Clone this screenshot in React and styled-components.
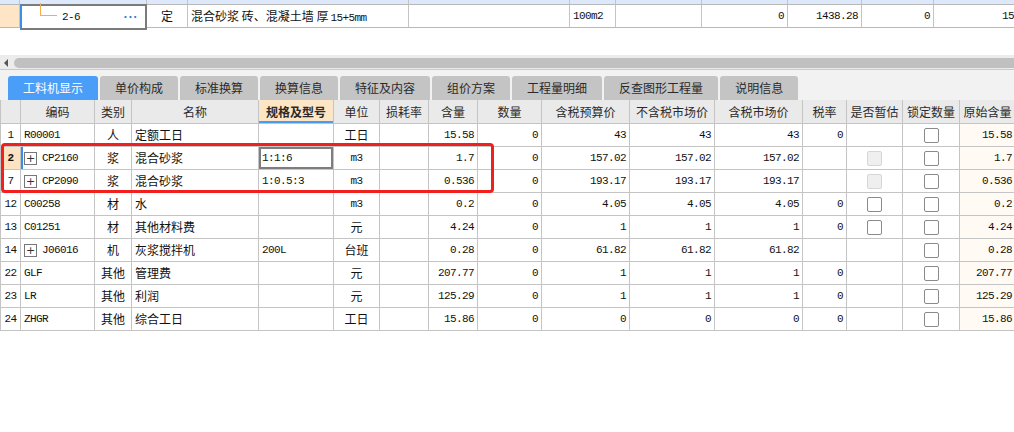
import React from 'react'
import styled, { createGlobalStyle } from 'styled-components'

const GlobalStyle = createGlobalStyle`
  html, body {
    margin: 0;
    padding: 0;
    background: #ffffff;
  }
  body {
    width: 1014px;
    height: 432px;
    overflow: hidden;
    font-family: "Noto Sans CJK SC", "Noto Sans", sans-serif;
    font-size: 12px;
    color: #1a1a1a;
  }
`

const mono = `"Liberation Mono", "DejaVu Sans Mono", "Noto Sans CJK SC", monospace`

const topCols = '20px 127px 41px 221px 161px 46px 86px 86px 74px 72px 114px'
const mainCols = '20px 74px 37px 127px 75px 46px 49px 49px 64px 88px 85px 88px 44px 56px 57px 56px'

const Page = styled.div`
  width: 1014px;
  height: 432px;
  overflow: hidden;
  background: #fff;
`

/* ---- upper grid (the quota rows) ---- */

const TopGrid = styled.div`
  display: grid;
  grid-template-columns: ${topCols};
  width: 1048px;
`

const StripCell = styled.div`
  height: 4px;
  background: #dde8fa;
  border-right: 1px solid #c4c4c4;
  border-bottom: 1px solid #b8b8b8;
`

const TopCell = styled.div`
  height: 22px;
  line-height: 22px;
  border-right: 1px solid #c4c4c4;
  border-bottom: 1px solid #b8b8b8;
  padding: 0 3px;
  text-align: ${p => p.$align || 'left'};
  font-family: ${p => (p.$mono ? mono : 'inherit')};
  font-size: ${p => (p.$mono ? '11px' : '12px')};
  letter-spacing: ${p => (p.$mono ? '-0.6px' : '0')};
  color: #111;
  background: ${p => p.$bg || 'transparent'};
  white-space: nowrap;
  overflow: hidden;
`

const Mono = styled.span`
  font-family: ${mono};
  font-size: 11px;
  letter-spacing: -0.6px;
  margin-left: 2px;
`

const TreeCell = styled.div`
  position: relative;
  height: 22px;
  margin-top: -1px;
  margin-bottom: -1px;
  border: 2px solid #7b7b7b;
  border-left: 2px solid #3b8ee8;
  display: flex;
  align-items: center;
  padding-left: 40px;
  padding-right: 7px;
  font-family: ${mono};
  font-size: 11px;
  letter-spacing: -0.6px;
  color: #111;
`

const TreeLine = styled.span`
  position: absolute;
  left: 18px;
  top: -3px;
  width: 16px;
  height: 12px;
  border-left: 1px solid #f5ae4e;
  border-bottom: 1px solid #f5ae4e;
`

const Dots = styled.span`
  margin-left: auto;
  color: #2f7fd8;
  font-weight: bold;
  letter-spacing: 1px;
  font-family: "DejaVu Sans", sans-serif;
  font-size: 10px;
`

const Gap = styled.div`
  height: 26px;
`

/* ---- horizontal scrollbar ---- */

const ScrollBar = styled.div`
  height: 15px;
  box-sizing: border-box;
  padding: 3px 0 2px;
  background: #ececec;
  border-bottom: 1px solid #c9c9c9;
  display: flex;
  align-items: center;
  gap: 6px;
`

const Arrow = styled.span`
  margin-left: 4px;
  width: 0;
  height: 0;
  border-top: 4px solid transparent;
  border-bottom: 4px solid transparent;
  border-right: 4px solid #555;
`

const Thumb = styled.div`
  flex: 1;
  height: 10px;
  border-radius: 5px 0 0 5px;
  background: #c0c0c0;
`

/* ---- tabs ---- */

const TabBar = styled.div`
  height: 30px;
  box-sizing: border-box;
  padding: 6px 0 0 8px;
  background: #f2f2f2;
  display: flex;
  gap: 2px;
`

const Tab = styled.div`
  height: 24px;
  line-height: 24px;
  padding: 0 15px;
  border-radius: 3px 3px 0 0;
  background: ${p => (p.$active ? '#4b9ef7' : '#c4c4c4')};
  color: ${p => (p.$active ? '#fff' : '#2a2a2a')};
  font-size: 12px;
  white-space: nowrap;
`

/* ---- main table ---- */

const Table = styled.div`
  position: relative;
  width: 1016px;
  border-left: 1px solid #c4c4c4;
`

const Row = styled.div`
  display: grid;
  grid-template-columns: ${mainCols};
`

const HeadCell = styled.div`
  height: 23px;
  line-height: 23px;
  text-align: center;
  background: ${p => (p.$hot ? '#fde6c6' : '#eaeaea')};
  font-weight: ${p => (p.$hot ? 'bold' : 'normal')};
  box-shadow: ${p => (p.$hot ? 'inset 0 -2px 0 #4a9cf2' : 'none')};
  color: #2a2a2a;
  border-right: 1px solid #c4c4c4;
  border-bottom: 1px solid #c4c4c4;
  white-space: nowrap;
  overflow: hidden;
`

const Cell = styled.div`
  position: relative;
  height: 22px;
  line-height: 22px;
  padding: 0 3px;
  border-right: 1px solid #c4c4c4;
  border-bottom: 1px solid #c4c4c4;
  text-align: ${p => p.$align || 'left'};
  font-family: ${p => (p.$mono ? mono : 'inherit')};
  font-size: ${p => (p.$mono ? '11px' : '12px')};
  letter-spacing: ${p => (p.$mono ? '-0.6px' : '0')};
  font-weight: ${p => (p.$bold ? 'bold' : 'normal')};
  color: #111;
  background: ${p => p.$bg || '#fff'};
  white-space: nowrap;
  overflow: hidden;
  display: ${p => (p.$flex ? 'flex' : 'block')};
  align-items: center;
  justify-content: center;
  ${p => p.$focus && 'box-shadow: inset 0 0 0 2px #7e7e7e;'}
  ${p => p.$lead && 'box-shadow: inset 2px 0 0 #3b8ee8;'}
`

const CodeWrap = styled.span`
  display: flex;
  align-items: center;
  gap: 5px;
`

const Expand = styled.span`
  width: 11px;
  height: 11px;
  border: 1px solid #777;
  display: inline-flex;
  align-items: center;
  justify-content: center;
  font-family: "DejaVu Sans", sans-serif;
  font-size: 11px;
  line-height: 1;
  color: #333;
  letter-spacing: 0;
`

const Check = styled.span`
  display: block;
  width: 13px;
  height: 13px;
  border-radius: 2px;
  border: 1px solid ${p => (p.$disabled ? '#d6d6d6' : '#8a8a8a')};
  background: ${p => (p.$disabled ? '#efefef' : '#fff')};
`

const Highlight = styled.div`
  position: absolute;
  left: 0;
  top: 43px;
  width: 493px;
  height: 50px;
  box-sizing: border-box;
  border: 3px solid #f0201e;
  border-radius: 4px;
  pointer-events: none;
`

const tabs = ['工料机显示', '单价构成', '标准换算', '换算信息', '特征及内容', '组价方案', '工程量明细', '反查图形工程量', '说明信息']

const heads = ['', '编码', '类别', '名称', '规格及型号', '单位', '损耗率', '含量', '数量', '含税预算价', '不含税市场价', '含税市场价', '税率', '是否暂估', '锁定数量', '原始含量']

// no, code, expandable, kind, name, spec, unit, qty, prices, tax, estimate ('', 'cb', 'dis')
const rows = [
  ['1', 'R00001', false, '人', '定额工日', '', '工日', '15.58', ['43', '43', '43'], '0', ''],
  ['2', 'CP2160', true, '浆', '混合砂浆', '1:1:6', 'm3', '1.7', ['157.02', '157.02', '157.02'], '', 'dis'],
  ['7', 'CP2090', true, '浆', '混合砂浆', '1:0.5:3', 'm3', '0.536', ['193.17', '193.17', '193.17'], '', 'dis'],
  ['12', 'C00258', false, '材', '水', '', 'm3', '0.2', ['4.05', '4.05', '4.05'], '0', 'cb'],
  ['13', 'C01251', false, '材', '其他材料费', '', '元', '4.24', ['1', '1', '1'], '0', 'cb'],
  ['14', 'J06016', true, '机', '灰浆搅拌机', '200L', '台班', '0.28', ['61.82', '61.82', '61.82'], '', ''],
  ['22', 'GLF', false, '其他', '管理费', '', '元', '207.77', ['1', '1', '1'], '0', ''],
  ['23', 'LR', false, '其他', '利润', '', '元', '125.29', ['1', '1', '1'], '0', ''],
  ['24', 'ZHGR', false, '其他', '综合工日', '', '工日', '15.86', ['0', '0', '0'], '0', ''],
]

const isAscii = s => /^[\x00-\x7f]*$/.test(s)

export default function App() {
  return (
    <Page>
      <GlobalStyle />

      <TopGrid>
        {Array.from({ length: 11 }).map((_, i) => <StripCell key={i} />)}
        <TopCell $bg="#fde5c5" />
        <TreeCell>
          <TreeLine />
          2-6
          <Dots>···</Dots>
        </TreeCell>
        <TopCell $align="center">定</TopCell>
        <TopCell>混合砂浆 砖、混凝土墙 厚<Mono>15+5mm</Mono></TopCell>
        <TopCell />
        <TopCell $mono>100m2</TopCell>
        <TopCell />
        <TopCell $mono $align="right">0</TopCell>
        <TopCell $mono $align="right">1438.28</TopCell>
        <TopCell $mono $align="right">0</TopCell>
        <TopCell $mono $align="right">1511.34</TopCell>
      </TopGrid>

      <Gap />

      <ScrollBar>
        <Arrow />
        <Thumb />
      </ScrollBar>

      <TabBar>
        {tabs.map((t, i) => <Tab key={t} $active={i === 0}>{t}</Tab>)}
      </TabBar>

      <Table>
        <Row>
          {heads.map((h, i) => <HeadCell key={i} $hot={i === 4}>{h}</HeadCell>)}
        </Row>
        {rows.map(([no, code, exp, kind, name, spec, unit, qty, prices, tax, est]) => {
          const sel = no === '2'
          return (
            <Row key={no}>
              <Cell $mono $align="center" $bold={sel} $bg={sel ? '#fde3c1' : '#fff'}>{no}</Cell>
              <Cell $mono $lead={sel}>
                {exp ? <CodeWrap><Expand>+</Expand>{code}</CodeWrap> : code}
              </Cell>
              <Cell $align="center">{kind}</Cell>
              <Cell>{name}</Cell>
              <Cell $mono $focus={sel}>{spec}</Cell>
              <Cell $align="center" $mono={isAscii(unit)}>{unit}</Cell>
              <Cell />
              <Cell $mono $align="right">{qty}</Cell>
              <Cell $mono $align="right">0</Cell>
              {prices.map((p, i) => <Cell key={i} $mono $align="right">{p}</Cell>)}
              <Cell $mono $align="right">{tax}</Cell>
              <Cell $flex>{est && <Check $disabled={est === 'dis'} />}</Cell>
              <Cell $flex><Check /></Cell>
              <Cell $mono $align="right" $bg="#fffaf3">{qty}</Cell>
            </Row>
          )
        })}
        <Highlight />
      </Table>
    </Page>
  )
}
